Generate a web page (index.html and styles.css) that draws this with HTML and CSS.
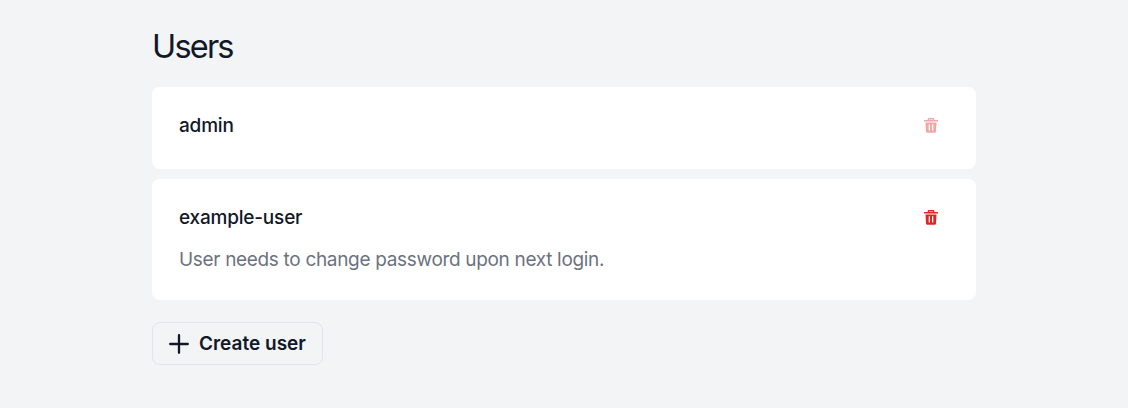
FILE: index.html
```html
<!DOCTYPE html>
<html lang="en">
<head>
<meta charset="utf-8">
<title>Users</title>
<link rel="stylesheet" href="styles.css">
</head>
<body>
<main class="page">
  <h1 class="title">Users</h1>
  <ul class="users">
    <li class="card">
      <div class="row">
        <span class="name">admin</span>
        <button class="delete" disabled aria-label="Delete admin">
          <svg class="trash" viewBox="0 0 14 15"><path fill="currentColor" fill-rule="evenodd" d="M3.600 2V1.400Q3.600 0 5 0h4q1.400 0 1.400 1.400V2H14v1.600H0V2zM5 2h4v-.6H5zM1.500 4.400h11l-.5 9q-.1 1.400-1.500 1.400H3.500q-1.400 0-1.500-1.400zM4.700 6.300v6.300h1.300V6.300zM8 6.300v6.300h1.300V6.300z"/></svg>
        </button>
      </div>
    </li>
    <li class="card">
      <div class="row">
        <span class="name">example-user</span>
        <button class="delete" aria-label="Delete example-user">
          <svg class="trash" viewBox="0 0 14 15"><path fill="currentColor" fill-rule="evenodd" d="M3.600 2V1.400Q3.600 0 5 0h4q1.400 0 1.400 1.400V2H14v1.600H0V2zM5 2h4v-.6H5zM1.500 4.400h11l-.5 9q-.1 1.400-1.500 1.400H3.500q-1.400 0-1.500-1.400zM4.700 6.300v6.300h1.300V6.300zM8 6.300v6.300h1.300V6.300z"/></svg>
        </button>
      </div>
      <p class="note">User needs to change password upon next login.</p>
    </li>
  </ul>
  <button class="create">
    <svg class="plus" viewBox="0 0 20 20"><path d="M10 1.200v17.600M1.200 10h17.600" fill="none" stroke="currentColor" stroke-width="2.300" stroke-linecap="round"/></svg>
    <span>Create user</span>
  </button>
</main>
</body>
</html>
```
FILE: styles.css
```css
* { box-sizing: border-box; }
body { margin: 0; background: #f3f4f6; color: #111827; font-family: Inter, "Liberation Sans", sans-serif; }
.page { width: 824px; margin: 0 auto; padding-top: 27px; }
.title { margin: 0 0 20.300px; font-size: 32.500px; line-height: 40px; font-weight: 400; letter-spacing: -1.800px; }
.users { list-style: none; margin: 0 0 22px; padding: 0; display: grid; gap: 10.600px; }
.card { background: #fff; border-radius: 8px; padding: 23px 38px 28.500px 27px; }
.row { display: flex; align-items: center; justify-content: space-between; height: 30px; }
.name { font-size: 19px; font-weight: 500; letter-spacing: -.2px; }
.delete { display: flex; padding: 0; border: 0; background: none; color: #e02424; }
.delete:disabled { opacity: .4; }
.trash { width: 14px; height: 15px; }
.note { margin: 15.500px 0 0; font-size: 19px; line-height: 24px; color: #6b7280; letter-spacing: -.32px; }
.create { display: flex; align-items: center; gap: 10px; width: 171px; height: 43px; padding: 0 16px; border: 1px solid #e2e4e9; border-radius: 8px; background: transparent; color: #111827; font: 600 19px Inter, sans-serif; white-space: nowrap; }
.plus { flex: none; width: 20px; height: 20px; }
```
